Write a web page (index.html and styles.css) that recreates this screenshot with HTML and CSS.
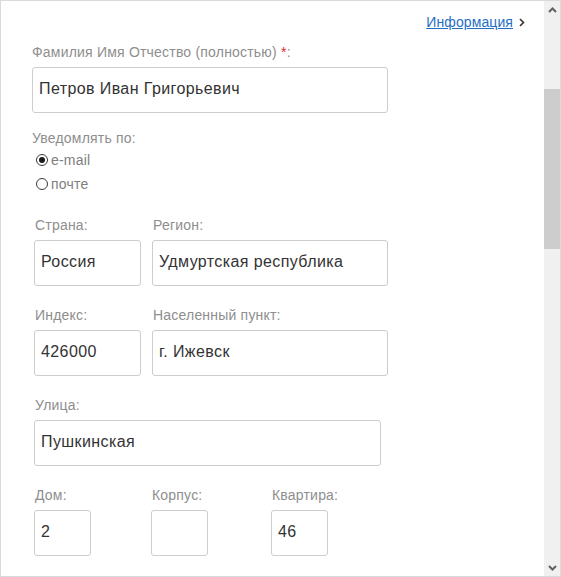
FILE: index.html
```
<!DOCTYPE html>
<html lang="ru">
<head>
<meta charset="utf-8">
<link rel="stylesheet" href="styles.css">
</head>
<body>
<div class="frame">
  <div class="content">
    <div class="toplink">
      <a class="info-link" href="#">Информация</a>
      <svg class="chev" width="6" height="9" viewBox="0 0 6 9"><path d="M1 1 L4.5 4.5 L1 8" fill="none" stroke="#333" stroke-width="1.6"/></svg>
    </div>

    <div class="field first">
      <div class="label">Фамилия Имя Отчество (полностью) <span class="req">*</span>:</div>
      <input class="inp w-full" type="text" value="Петров Иван Григорьевич">
    </div>

    <div class="label notify">Уведомлять по:</div>
    <div class="radios">
      <div class="radio-row"><span class="radio checked"></span><span class="radio-text">e-mail</span></div>
      <div class="radio-row"><span class="radio"></span><span class="radio-text">почте</span></div>
    </div>

    <div class="rows">
      <div class="row">
        <div class="col c-small"><div class="label">Страна:</div><input class="inp w-107" type="text" value="Россия"></div>
        <div class="col"><div class="label">Регион:</div><input class="inp w-236" type="text" value="Удмуртская республика"></div>
      </div>
      <div class="row">
        <div class="col c-small"><div class="label">Индекс:</div><input class="inp w-107" type="text" value="426000"></div>
        <div class="col"><div class="label">Населенный пункт:</div><input class="inp w-236" type="text" value="г. Ижевск"></div>
      </div>
      <div class="row">
        <div class="col"><div class="label">Улица:</div><input class="inp w-347" type="text" value="Пушкинская"></div>
      </div>
      <div class="row">
        <div class="col c-house"><div class="label">Дом:</div><input class="inp w-57" type="text" value="2"></div>
        <div class="col c-korp"><div class="label">Корпус:</div><input class="inp w-57" type="text" value=""></div>
        <div class="col"><div class="label">Квартира:</div><input class="inp w-57" type="text" value="46"></div>
      </div>
    </div>
  </div>

  <div class="scrollbar">
    <div class="sb-btn"><svg width="9" height="6" viewBox="0 0 9 6"><path d="M1 5 L4.5 1.5 L8 5" fill="none" stroke="#606060" stroke-width="2"/></svg></div>
    <div class="sb-thumb"></div>
    <div class="sb-space"></div>
    <div class="sb-btn"><svg width="9" height="6" viewBox="0 0 9 6"><path d="M1 1 L4.5 4.5 L8 1" fill="none" stroke="#606060" stroke-width="2"/></svg></div>
  </div>
</div>
</body>
</html>
```

FILE: styles.css
```
html, body {
  margin: 0;
  padding: 0;
  background: #ffffff;
}

body {
  font-family: "Liberation Sans", Arial, sans-serif;
}

.frame {
  box-sizing: border-box;
  width: 561px;
  height: 577px;
  border: 1px solid #dadada;
  display: flex;
  overflow: hidden;
}

.content {
  flex: 1;
  padding: 13px 19px 0 31px;
}

.toplink {
  display: flex;
  justify-content: flex-end;
  align-items: center;
  height: 16px;
  gap: 6px;
}

.info-link {
  font-size: 14px;
  line-height: 16px;
  color: #1f6fc5;
  text-decoration: underline;
  letter-spacing: 0.1px;
}

.chev {
  display: block;
  margin-top: 1px;
}

.field.first {
  margin-top: 14px;
}

.label {
  font-size: 14px;
  line-height: 16px;
  color: #8e8e8e;
  margin-bottom: 7px;
  white-space: nowrap;
  letter-spacing: 0.2px;
}

.label .req {
  color: #e5262b;
}

.inp {
  display: block;
  box-sizing: border-box;
  height: 46px;
  border: 1px solid #cdcdcd;
  border-radius: 3px;
  padding: 0 6px 2px 6px;
  margin: 0;
  font-family: "Liberation Sans", Arial, sans-serif;
  font-size: 16px;
  letter-spacing: 0.4px;
  color: #333333;
  background: #ffffff;
  outline: none;
}

.w-full { width: 356px; }
.w-107 { width: 107px; }
.w-236 { width: 236px; }
.w-347 { width: 347px; }
.w-57 { width: 57px; }

.label.notify {
  margin-top: 17px;
  margin-bottom: 0;
}

.radios {
  margin-top: 2px;
  padding-left: 4px;
}

.radio-row {
  display: flex;
  align-items: center;
  height: 24px;
}

.radio {
  box-sizing: border-box;
  width: 12px;
  height: 12px;
  border: 1px solid #3a3a3a;
  border-radius: 50%;
  display: flex;
  align-items: center;
  justify-content: center;
  margin-right: 3px;
}

.radio.checked::after {
  content: "";
  width: 6px;
  height: 6px;
  border-radius: 50%;
  background: #1a1a1a;
}

.radio-text {
  font-size: 14px;
  color: #7e7e7e;
  letter-spacing: 0.2px;
}

.rows {
  margin-top: 21px;
  margin-left: 2px;
  display: flex;
  flex-direction: column;
  gap: 21px;
}

.row {
  display: flex;
}

.col .label {
  padding-left: 1px;
}

.c-small { width: 118px; }
.c-house { width: 117px; }
.c-korp { width: 120px; }

.scrollbar {
  width: 16px;
  background: #f0f0f0;
  display: flex;
  flex-direction: column;
}

.sb-btn {
  height: 17px;
  display: flex;
  align-items: center;
  justify-content: center;
}

.sb-thumb {
  margin-top: 71px;
  height: 160px;
  background: #cdcdcd;
}

.sb-space {
  flex: 1;
}
```
